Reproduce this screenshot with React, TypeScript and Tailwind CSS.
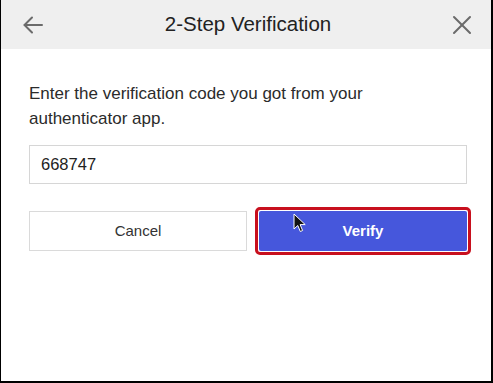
import React from "react";

const ArrowLeft = () => (
  <svg width="22" height="22" viewBox="0 0 22 22" fill="none" stroke="#6b6b6b" strokeWidth="2" strokeLinecap="round">
    <path d="M20 11H3" />
    <path d="M10 3.5L2.5 11L10 18.5" />
  </svg>
);

const CloseIcon = () => (
  <svg width="20" height="20" viewBox="0 0 20 20" fill="none" stroke="#6b6b6b" strokeWidth="2" strokeLinecap="round">
    <path d="M2 2L18 18" />
    <path d="M18 2L2 18" />
  </svg>
);

const Cursor = () => (
  <svg width="14" height="20" viewBox="0 0 14 20" className="absolute left-[35px] top-[3px]">
    <path d="M1 1V16L4.8 12.5L7.3 18.5L9.6 17.5L7.1 11.6H12.2Z" fill="#111" stroke="#fff" strokeWidth="1" />
  </svg>
);

export default function App() {
  return (
    <div className="w-[493px] h-[383px] bg-white border-l border-r-2 border-b-2 border-black flex flex-col font-['Liberation_Sans',Arial,sans-serif] overflow-hidden">
      <div className="h-[49px] bg-[#efefef] flex items-center justify-between pl-[21px] pr-[19px] shrink-0">
        <ArrowLeft />
        <div className="text-[20.5px] text-[#222]">2-Step Verification</div>
        <CloseIcon />
      </div>
      <div className="pl-[28px] pr-[20px] pt-[32px]">
        <p className="text-[17px] leading-[25px] text-[#2b2b2b]">
          Enter the verification code you got from your
          <br />
          authenticator app.
        </p>
        <div className="mt-[14px] h-[39px] w-[438px] border border-[#d6d6d6] flex items-center pl-[11px] text-[16.5px] text-[#222]">
          668747
        </div>
        <div className="mt-[23px] flex items-center gap-[8px]">
          <button className="shrink-0 w-[218px] h-[40px] border border-[#dadada] bg-white text-[15px] text-[#333] flex items-center justify-center">
            Cancel
          </button>
          <div className="shrink-0 relative rounded-[5px] border-[3px] border-[#c8101e] p-[1px]">
            <button className="w-[208px] h-[40px] bg-[#4657dc] text-white font-bold text-[15px] flex items-center justify-center rounded-[2px]">
              Verify
            </button>
            <Cursor />
          </div>
        </div>
      </div>
    </div>
  );
}
